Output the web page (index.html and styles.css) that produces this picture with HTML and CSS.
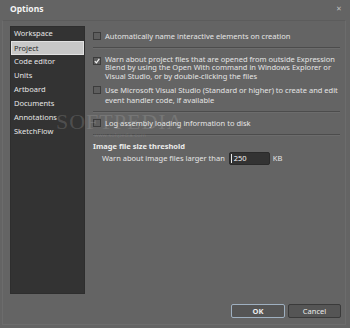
FILE: index.html
```html
<!DOCTYPE html>
<html lang="en">
<head>
    <meta charset="UTF-8">
    <title>Options</title>
    <link rel="stylesheet" href="styles.css">
</head>
<body>
<div class="window">
    <div class="titlebar">
        <span class="title">Options</span>
        <span class="close">&#x2715;</span>
    </div>
    <div class="frame">
        <div class="main">
            <ul class="nav">
                <li>Workspace</li>
                <li class="selected">Project</li>
                <li>Code editor</li>
                <li>Units</li>
                <li>Artboard</li>
                <li>Documents</li>
                <li>Annotations</li>
                <li>SketchFlow</li>
            </ul>
            <div class="content">
                <label class="option first">
                    <span class="box"></span>
                    <span class="text">Automatically name interactive elements on creation</span>
                </label>
                <div class="sep"></div>
                <label class="option opt-warn">
                    <span class="box checked">
                        <svg width="6" height="6" viewBox="0 0 6 6"><path d="M0.8 3.2 L2.4 4.8 L5.3 0.9" fill="none" stroke="#f2f2f2" stroke-width="1.2"/></svg>
                    </span>
                    <span class="text">Warn about project files that are opened from outside Expression Blend by using the Open With command in Windows Explorer or Visual Studio, or by double-clicking the files</span>
                </label>
                <label class="option opt-vs">
                    <span class="box"></span>
                    <span class="text">Use Microsoft Visual Studio (Standard or higher) to create and edit event handler code, if available</span>
                </label>
                <div class="sep"></div>
                <label class="option opt-log">
                    <span class="box"></span>
                    <span class="text">Log assembly loading information to disk</span>
                </label>
                <div class="sep"></div>
                <div class="heading">Image file size threshold</div>
                <div class="size-row">
                    <span>Warn about image files larger than</span>
                    <span class="field"><span class="caret"></span>250</span>
                    <span>KB</span>
                </div>
            </div>
        </div>
        <div class="footer">
            <button class="btn default">OK</button>
            <button class="btn">Cancel</button>
        </div>
    </div>
    <div class="watermark">
        <span class="wm-big">SOFTPEDIA</span>
        <span class="wm-small">www.softpedia.com</span>
    </div>
</div>
</body>
</html>
```
FILE: styles.css
```css
html, body {
    margin: 0;
    padding: 0;
}
body {
    width: 350px;
    height: 328px;
    background-color: #646464;
    font-family: "Noto Sans", "Open Sans", sans-serif;
    font-size: 7.5px;
    color: #e4e4e4;
    overflow: hidden;
}
.window {
    position: relative;
    height: 328px;
}
.titlebar {
    height: 20px;
    display: flex;
    justify-content: space-between;
    align-items: flex-start;
    padding: 3px 8px 0 10px;
    box-sizing: border-box;
}
.title {
    font-weight: bold;
    font-size: 8.5px;
    color: #f4f4f4;
    line-height: 11px;
}
.close {
    font-size: 7px;
    color: #bdbdbd;
    line-height: 11px;
}
.frame {
    margin: 0 4px 0 2px;
    height: 305px;
    border: 1px solid #6c6c6c;
    border-top-color: #5c5c5c;
    box-sizing: border-box;
    display: flex;
    flex-direction: column;
}
.main {
    display: flex;
    padding: 5px 0 0 7px;
}
.nav {
    list-style: none;
    margin: 0;
    padding: 0;
    width: 75px;
    height: 268px;
    background-color: #333333;
    box-sizing: border-box;
    border: 1px solid #2e2e2e;
}
.nav li {
    height: 14px;
    line-height: 13px;
    padding-left: 3px;
    color: #e6e6e6;
    box-sizing: border-box;
}
.nav li.selected {
    background-color: #c8c8c8;
    border: 1px solid #e2e2e2;
    color: #2a2a2a;
    padding-left: 2px;
    line-height: 12px;
}
.content {
    margin-left: 8px;
    width: 247px;
}
.option {
    display: flex;
    align-items: flex-start;
    line-height: 8.5px;
}
.option .text {
    margin-left: 4px;
}
.first {
    margin-top: 6px;
}
.box {
    flex: none;
    width: 8px;
    height: 8px;
    box-sizing: border-box;
    border: 1px solid #3c3c3c;
    background-color: #5e5e5e;
    display: flex;
    align-items: center;
    justify-content: center;
}
.opt-warn .box {
    margin-top: 2px;
}
.sep {
    height: 0;
    border-top: 1px solid #4c4c4c;
    border-bottom: 1px solid #6c6c6c;
    margin: 6px 0;
}
.opt-vs {
    margin-top: 6px;
}
.opt-vs .text {
    line-height: 9.5px;
}
.heading {
    font-weight: bold;
    line-height: 9px;
    color: #ececec;
}
.size-row {
    display: flex;
    align-items: center;
    margin-top: 1px;
    margin-left: 9px;
}
.field {
    display: flex;
    align-items: center;
    width: 41px;
    height: 13px;
    margin: 0 3px 0 4px;
    background-color: #333333;
    border: 1px solid #2a2a2a;
    border-radius: 2px;
    box-sizing: border-box;
    color: #f2f2f2;
}
.caret {
    width: 1px;
    height: 9px;
    background-color: #e8e8e8;
    margin: 0 2px 0 1px;
}
.footer {
    margin-top: auto;
    display: flex;
    justify-content: flex-end;
    gap: 3px;
    padding: 0 4px 6px 0;
}
.btn {
    width: 53px;
    height: 14px;
    padding: 0;
    font-family: inherit;
    font-size: 7.5px;
    color: #ececec;
    background-color: #555555;
    border: 1px solid #3a3a3a;
    border-radius: 2px;
}
.btn.default {
    width: 54px;
    border-color: #9fb0c0;
    font-weight: bold;
}
.watermark {
    position: absolute;
    left: 56px;
    top: 112px;
    display: flex;
    flex-direction: column;
    align-items: center;
    pointer-events: none;
}
.wm-big {
    font-family: "Liberation Serif", serif;
    font-size: 22px;
    letter-spacing: 1px;
    color: rgba(200, 200, 200, 0.2);
    line-height: 20px;
}
.wm-small {
    font-family: "Liberation Sans", sans-serif;
    font-size: 6px;
    color: rgba(200, 200, 200, 0.18);
}
```
